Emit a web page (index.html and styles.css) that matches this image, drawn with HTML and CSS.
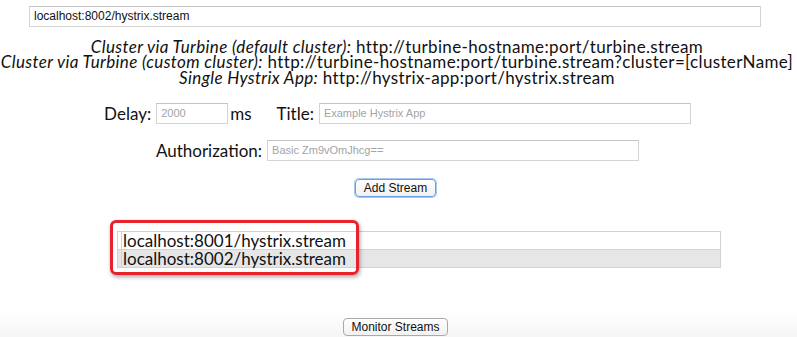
FILE: index.html
```html
<!DOCTYPE html>
<html lang="en">

<head>
    <meta charset="UTF-8">
    <meta name="viewport" content="width=device-width, initial-scale=1.0">
    <title>Hystrix Dashboard</title>
    <link rel="stylesheet" href="styles.css">
</head>

<body>
    <div class="stream-bar">
        <input type="text" class="stream-url" value="localhost:8002/hystrix.stream">
    </div>

    <div class="examples">
        <p><i>Cluster via Turbine (default cluster):</i> http://turbine-hostname:port/turbine.stream</p>
        <p><i>Cluster via Turbine (custom cluster):</i> http://turbine-hostname:port/turbine.stream?cluster=[clusterName]</p>
        <p><i>Single Hystrix App:</i> http://hystrix-app:port/hystrix.stream</p>
    </div>

    <div class="options">
        <div class="opt-row">
            <label>Delay:</label>
            <input type="text" class="delay" placeholder="2000">
            <span class="unit">ms</span>
            <label class="title-label">Title:</label>
            <input type="text" class="title" placeholder="Example Hystrix App">
        </div>
        <div class="opt-row">
            <label>Authorization:</label>
            <input type="text" class="auth" placeholder="Basic Zm9vOmJhcg==">
        </div>
    </div>

    <div class="actions">
        <button class="btn btn-focus">Add Stream</button>
    </div>

    <div class="streams-wrap">
        <table class="streams">
            <tr>
                <td class="del"></td>
                <td>localhost:8001/hystrix.stream</td>
            </tr>
            <tr class="alt">
                <td class="del"></td>
                <td>localhost:8002/hystrix.stream</td>
            </tr>
        </table>
        <!-- annotation box drawn over the list -->
        <div class="highlight"></div>
    </div>

    <div class="footer">
        <button class="btn">Monitor Streams</button>
    </div>
</body>

</html>
```

FILE: styles.css
```css
* {
    margin: 0;
    padding: 0;
    box-sizing: border-box;
}

body {
    width: 797px;
    height: 337px;
    overflow: hidden;
    background: #fff;
    color: #111;
    font-family: "Lato", "DejaVu Sans", sans-serif;
    font-size: 17px;
}

input {
    font-family: "Liberation Sans", Arial, sans-serif;
    font-size: 11px;
    color: #111;
    height: 21px;
    padding: 2px 4px;
    border: 1px solid #d4d4d4;
    border-top-color: #c4c4c4;
    background: #fff;
    outline: none;
}

input::placeholder {
    color: #a3a3a3;
}

.stream-bar {
    padding: 3px 0 0 29px;
}

.stream-url {
    width: 732px;
    font-size: 12px;
    padding-left: 4px;
}

.examples {
    margin-top: 12px;
    text-align: center;
    white-space: nowrap;
    line-height: 15.5px;
    letter-spacing: .35px;
    padding-right: 3px;
}

.options {
    margin-top: 18px;
}

.opt-row {
    display: flex;
    justify-content: center;
    align-items: center;
    height: 20px;
    padding-right: 2px;
}

.opt-row + .opt-row {
    margin-top: 17px;
}

.opt-row label {
    margin-right: 5px;
}

.delay {
    width: 72px;
}

.unit {
    margin-left: 2px;
}

.opt-row .title-label {
    margin-left: 25px;
}

.title {
    width: 372px;
}

.auth {
    width: 372px;
}

.actions {
    margin-top: 15px;
    text-align: center;
    padding-right: 6px;
}

.btn {
    font-family: "Liberation Sans", Arial, sans-serif;
    font-size: 12px;
    color: #111;
    height: 18px;
    padding: 0 7px;
    border: 1px solid #aaa;
    border-radius: 4px;
    background: linear-gradient(#fff, #f1f1f1);
}

.btn-focus {
    border-color: #6c9fe0;
    box-shadow: 0 0 0 1px #a8c7f1;
    padding: 0 8px;
}

.streams-wrap {
    position: relative;
    margin-top: 34px;
    padding-left: 117px;
}

.streams {
    width: 604px;
    border-collapse: collapse;
    border: 1px solid #d2d2d2;
}

.streams td {
    height: 18px;
    line-height: 17px;
    padding: 0 0 0 1px;
    border-top: 1px solid #d2d2d2;
}

.streams td.del {
    width: 4px;
    border-right: 1px solid #d2d2d2;
}

.streams tr.alt {
    background: #e6e6e6;
}

.highlight {
    position: absolute;
    left: 110px;
    top: -11px;
    width: 249px;
    height: 55px;
    border: 3px solid #e8212d;
    border-radius: 6px;
    box-shadow: 1px 2px 4px rgba(0, 0, 0, .35);
    pointer-events: none;
}

.footer {
    margin-top: 44px;
    height: 30px;
    padding-top: 2px;
    text-align: center;
    padding-right: 6px;
    background: linear-gradient(#fff, #f3f3f3);
}
```
